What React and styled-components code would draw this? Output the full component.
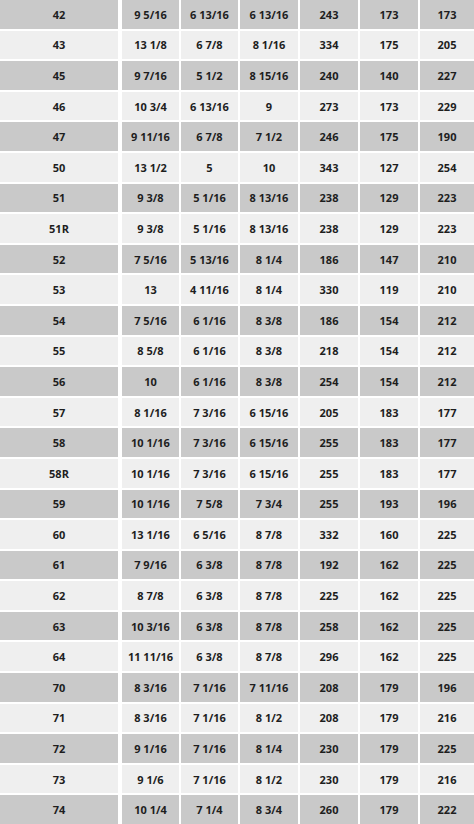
import styled, { createGlobalStyle } from 'styled-components'

const Global = createGlobalStyle`
  html, body {
    margin: 0;
    padding: 0;
    background: #ffffff;
  }
  body {
    font-family: "Open Sans", "Liberation Sans", sans-serif;
    overflow: hidden;
  }
`

const rows = [
    ['42', '9 5/16', '6 13/16', '6 13/16', '243', '173', '173'],
    ['43', '13 1/8', '6 7/8', '8 1/16', '334', '175', '205'],
    ['45', '9 7/16', '5 1/2', '8 15/16', '240', '140', '227'],
    ['46', '10 3/4', '6 13/16', '9', '273', '173', '229'],
    ['47', '9 11/16', '6 7/8', '7 1/2', '246', '175', '190'],
    ['50', '13 1/2', '5', '10', '343', '127', '254'],
    ['51', '9 3/8', '5 1/16', '8 13/16', '238', '129', '223'],
    ['51R', '9 3/8', '5 1/16', '8 13/16', '238', '129', '223'],
    ['52', '7 5/16', '5 13/16', '8 1/4', '186', '147', '210'],
    ['53', '13', '4 11/16', '8 1/4', '330', '119', '210'],
    ['54', '7 5/16', '6 1/16', '8 3/8', '186', '154', '212'],
    ['55', '8 5/8', '6 1/16', '8 3/8', '218', '154', '212'],
    ['56', '10', '6 1/16', '8 3/8', '254', '154', '212'],
    ['57', '8 1/16', '7 3/16', '6 15/16', '205', '183', '177'],
    ['58', '10 1/16', '7 3/16', '6 15/16', '255', '183', '177'],
    ['58R', '10 1/16', '7 3/16', '6 15/16', '255', '183', '177'],
    ['59', '10 1/16', '7 5/8', '7 3/4', '255', '193', '196'],
    ['60', '13 1/16', '6 5/16', '8 7/8', '332', '160', '225'],
    ['61', '7 9/16', '6 3/8', '8 7/8', '192', '162', '225'],
    ['62', '8 7/8', '6 3/8', '8 7/8', '225', '162', '225'],
    ['63', '10 3/16', '6 3/8', '8 7/8', '258', '162', '225'],
    ['64', '11 11/16', '6 3/8', '8 7/8', '296', '162', '225'],
    ['70', '8 3/16', '7 1/16', '7 11/16', '208', '179', '196'],
    ['71', '8 3/16', '7 1/16', '8 1/2', '208', '179', '216'],
    ['72', '9 1/16', '7 1/16', '8 1/4', '230', '179', '225'],
    ['73', '9 1/6', '7 1/16', '8 1/2', '230', '179', '216'],
    ['74', '10 1/4', '7 1/4', '8 3/4', '260', '179', '222'],
]

const SizeTable = () => {
    return (
        <>
            <Global />
            <Wrapper>
                {rows.map((row, i) => (
                    <Row key={row[0]} $dark={i % 2 === 0}>
                        {row.map((val, j) => (
                            <Cell key={j} $first={j === 0}>{val}</Cell>
                        ))}
                    </Row>
                ))}
            </Wrapper>
        </>
    )
}

const Wrapper = styled.section`
  width: 474px;
  height: 824px;
  overflow: hidden;
  display: flex;
  flex-direction: column;
  gap: 2px;
`

const Row = styled.div`
  display: grid;
  grid-template-columns: 120px 57px 57px 58px 58px 58px 1fr;
  column-gap: 2px;
  flex: 0 0 28.6px;
  --cell-bg: ${p => (p.$dark ? '#c9c9c9' : '#efefef')};
`

const Cell = styled.div`
  background: var(--cell-bg);
  margin-right: ${p => (p.$first ? '2px' : '0')};
  display: flex;
  align-items: center;
  justify-content: center;
  font-size: 11px;
  font-weight: 700;
  color: #1e1e1e;
  white-space: nowrap;
`

export default SizeTable
